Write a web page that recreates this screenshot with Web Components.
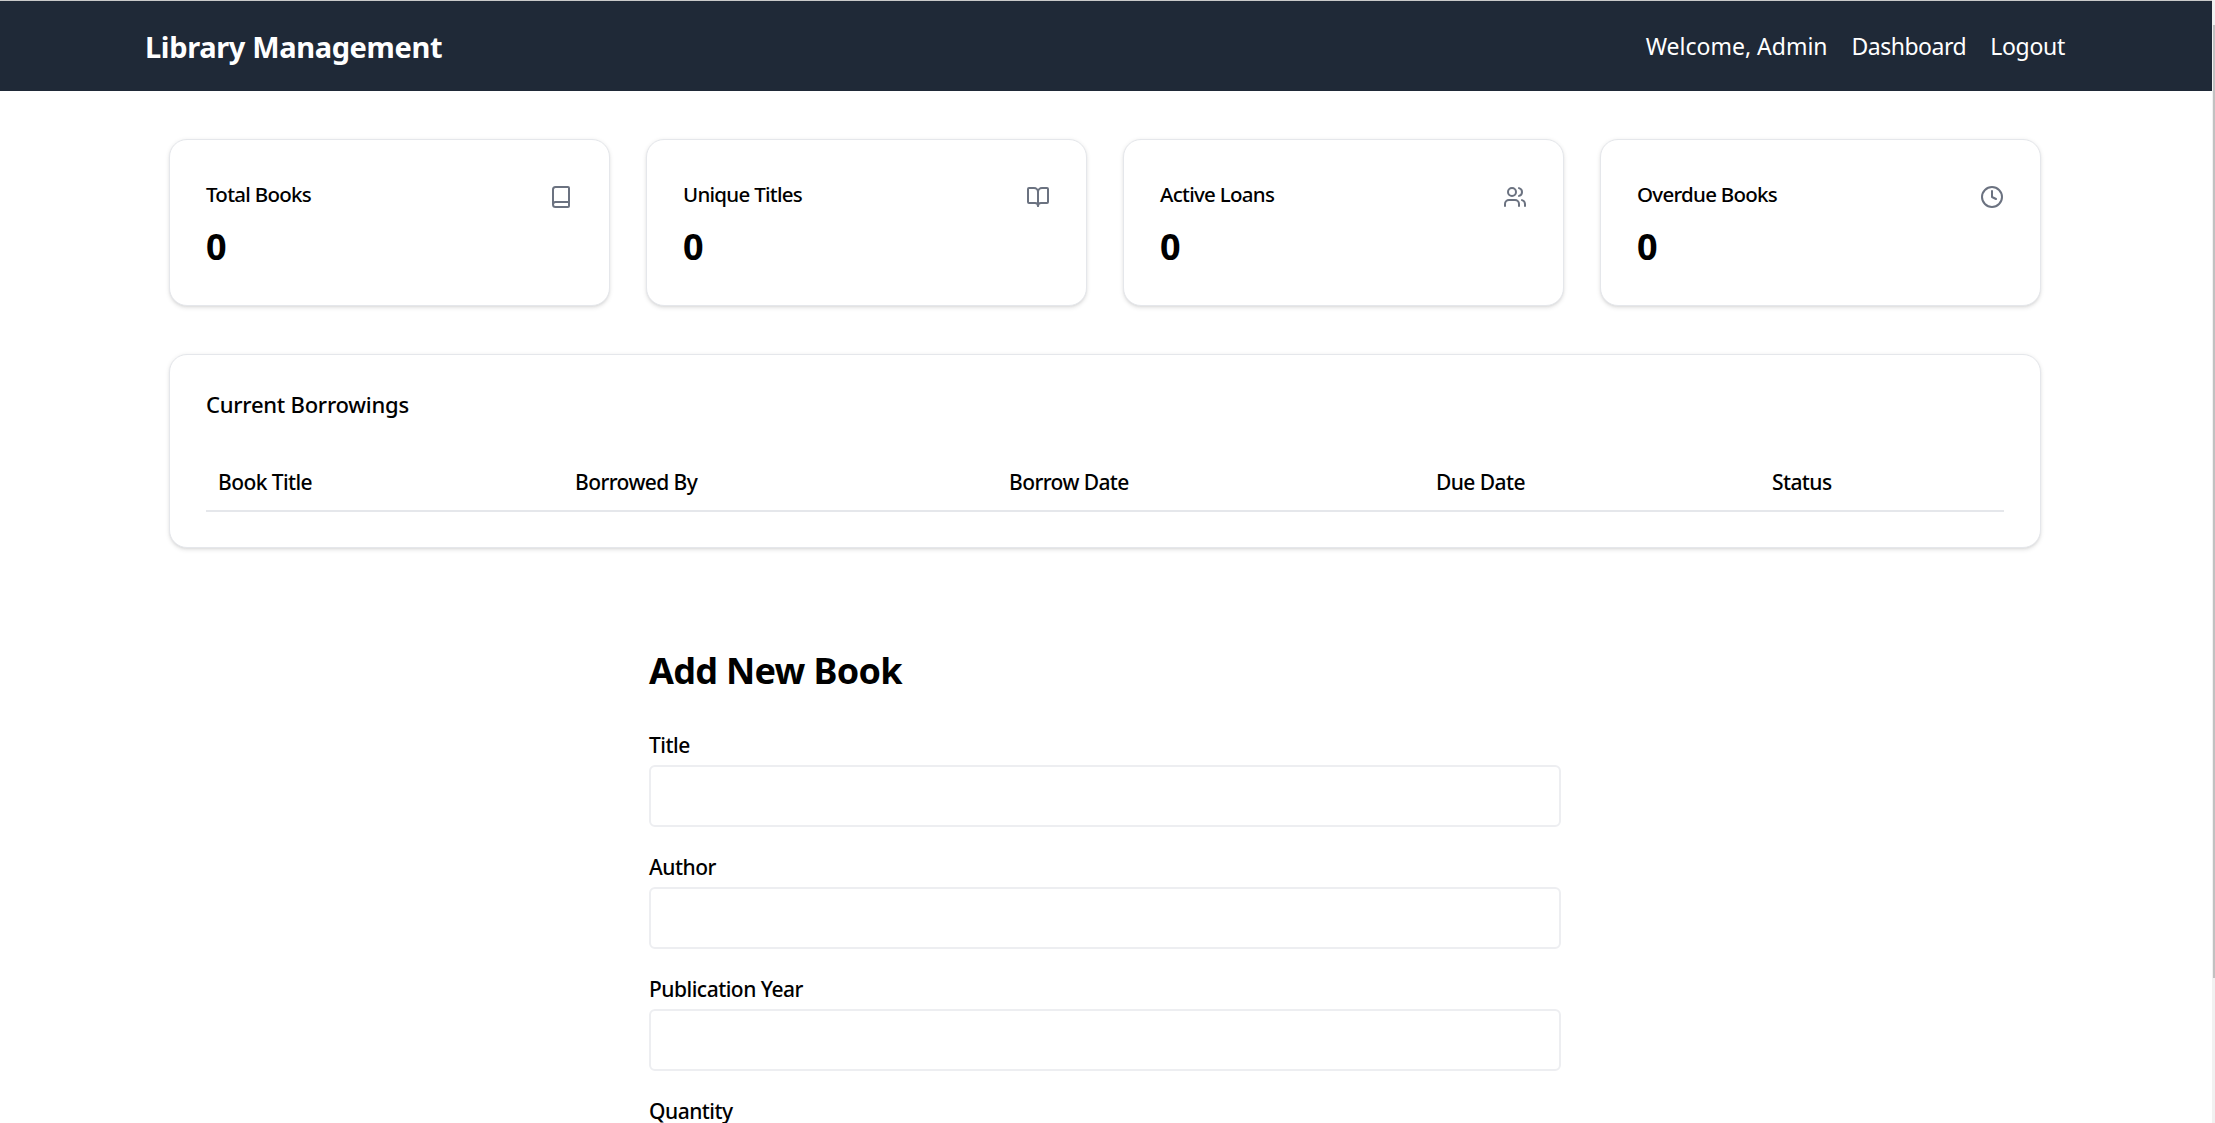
<!DOCTYPE html>
<html lang="en">
<head>
<meta charset="utf-8">
<title>Library Management</title>
<style>
  html, body { margin: 0; padding: 0; height: 100%; overflow: hidden; background: #fff; }
  body { font-family: "Noto Sans", "Open Sans", sans-serif; color: #000; }
</style>
</head>
<body>
<library-app></library-app>

<script>
const ICONS = {
  book: '<path d="M4 19.5v-15A2.5 2.5 0 0 1 6.5 2H19a1 1 0 0 1 1 1v18a1 1 0 0 1-1 1H6.5a1 1 0 0 1 0-5H20"/>',
  open: '<path d="M12 7v14"/><path d="M3 18a1 1 0 0 1-1-1V4a1 1 0 0 1 1-1h5a4 4 0 0 1 4 4 4 4 0 0 1 4-4h5a1 1 0 0 1 1 1v13a1 1 0 0 1-1 1h-6a3 3 0 0 0-3 3 3 3 0 0 0-3-3z"/>',
  users: '<path d="M16 21v-2a4 4 0 0 0-4-4H6a4 4 0 0 0-4 4v2"/><circle cx="9" cy="7" r="4"/><path d="M22 21v-2a4 4 0 0 0-3-3.87"/><path d="M16 3.13a4 4 0 0 1 0 7.75"/>',
  clock: '<circle cx="12" cy="12" r="10"/><polyline points="12 6 12 12 16 14"/>'
};

class LibIcon extends HTMLElement {
  constructor() {
    super();
    this.attachShadow({mode: 'open'});
  }
  connectedCallback() {
    this.shadowRoot.innerHTML = `
      <style>
        :host { display: block; width: 24px; height: 24px; color: #6b7280; }
        svg { display: block; }
      </style>
      <svg width="24" height="24" viewBox="0 0 24 24" fill="none" stroke="currentColor"
           stroke-width="2" stroke-linecap="round" stroke-linejoin="round">${ICONS[this.getAttribute('name')]}</svg>
    `;
  }
}

class LibNav extends HTMLElement {
  constructor() {
    super();
    this.attachShadow({mode: 'open'});
    this.shadowRoot.innerHTML = `
      <style>
        :host { display: block; background: #1f2937; color: #fff; border-top: 1px solid #c9c9c9; padding-right: 2px; }
        .inner { box-sizing: border-box; max-width: 1920px; height: 90px; margin: 0 auto;
                 display: flex; align-items: center; justify-content: space-between; }
        .brand { font-size: 29px; font-weight: 700; letter-spacing: -0.36px; }
        .links { display: flex; gap: 24px; font-size: 23px; }
        .dash { letter-spacing: -0.5px; }
        .out { letter-spacing: -0.28px; }
      </style>
      <div class="inner">
        <div class="brand">Library Management</div>
        <div class="links"><span>Welcome, Admin</span><span class="dash">Dashboard</span><span class="out">Logout</span></div>
      </div>
    `;
  }
}

class StatCard extends HTMLElement {
  constructor() {
    super();
    this.attachShadow({mode: 'open'});
    this.shadowRoot.innerHTML = `
      <style>
        :host { display: block; box-sizing: border-box; height: 167px; padding: 36px;
                background: #fff; border: 1px solid #e5e7eb; border-radius: 18px;
                box-shadow: 0 1.5px 4.5px rgba(0,0,0,.1), 0 1.5px 3px -1.5px rgba(0,0,0,.1); }
        .head { display: flex; justify-content: space-between; align-items: flex-start; height: 54px; }
        .label { font-size: 20.5px; font-weight: 500; line-height: 36px; letter-spacing: -0.72px; }
        ::slotted(lib-icon) { margin-top: 9px; }
        .value { font-size: 36px; font-weight: 700; line-height: 48px; margin-top: -7px; }
      </style>
      <div class="head"><div class="label"></div><slot></slot></div>
      <div class="value"></div>
    `;
  }
  connectedCallback() {
    this.shadowRoot.querySelector('.label').textContent = this.getAttribute('label');
    this.shadowRoot.querySelector('.value').textContent = this.getAttribute('value');
  }
}

class BorrowTable extends HTMLElement {
  constructor() {
    super();
    this.attachShadow({mode: 'open'});
    this.shadowRoot.innerHTML = `
      <style>
        :host { display: block; box-sizing: border-box; height: 194px; padding: 36px;
                background: #fff; border: 1px solid #e5e7eb; border-radius: 18px;
                box-shadow: 0 1.5px 4.5px rgba(0,0,0,.1), 0 1.5px 3px -1.5px rgba(0,0,0,.1); }
        h2 { margin: -5px 0 0; font-size: 22px; font-weight: 500; line-height: 36px; letter-spacing: -0.25px; }
        .row { display: grid; grid-template-columns: 357px 434px 427px 336px 1fr; box-sizing: border-box;
               margin-top: 29px; border-bottom: 2px solid #e5e7eb; height: 61px; padding-top: 3px; align-items: center; }
        .row span { padding-left: 12px; font-size: 21px; font-weight: 500; letter-spacing: -0.58px; }
      </style>
      <h2>Current Borrowings</h2>
      <div class="row">
        <span>Book Title</span><span>Borrowed By</span><span>Borrow Date</span><span>Due Date</span><span>Status</span>
      </div>
    `;
  }
}

class FormField extends HTMLElement {
  constructor() {
    super();
    this.attachShadow({mode: 'open'});
    this.shadowRoot.innerHTML = `
      <style>
        :host { display: block; margin-bottom: 24px; }
        label { display: block; font-size: 21px; font-weight: 500; line-height: 30px; padding-top: 1px; margin-bottom: 5px; letter-spacing: -0.5px; }
        input { display: block; box-sizing: border-box; width: 100%; height: 62px; padding: 0 18px;
                border: 2px solid #edeef1; border-radius: 6px; background: #fff; font: inherit; outline: none; }
      </style>
      <label for="f"></label>
      <input id="f" type="text">
    `;
  }
  connectedCallback() {
    this.shadowRoot.querySelector('label').textContent = this.getAttribute('label');
  }
}

class BookForm extends HTMLElement {
  constructor() {
    super();
    this.attachShadow({mode: 'open'});
    this.shadowRoot.innerHTML = `
      <style>
        :host { display: block; box-sizing: border-box; width: 1008px; margin: 51px auto 0; padding: 48px; }
        h1 { margin: 0 0 34px; font-size: 36px; font-weight: 700; line-height: 48px; letter-spacing: -0.7px; }
      </style>
      <h1>Add New Book</h1>
      <slot></slot>
    `;
  }
}

class ScrollStrip extends HTMLElement {
  constructor() {
    super();
    this.attachShadow({mode: 'open'});
    this.shadowRoot.innerHTML = `
      <style>
        :host { position: fixed; top: 0; right: 0; bottom: 0; width: 3px; background: #f1f1f1; }
        .thumb { position: absolute; top: 25px; left: 1px; right: 0; height: 953px; background: #c1c1c1; }
      </style>
      <div class="thumb"></div>
    `;
  }
}

class LibraryApp extends HTMLElement {
  constructor() {
    super();
    this.attachShadow({mode: 'open'});
    this.shadowRoot.innerHTML = `
      <style>
        :host { display: block; margin-right: 3px; }
        main { box-sizing: border-box; max-width: 1920px; margin: 0 auto; padding: 48px 25px 0 23px; }
        .stats { display: grid; grid-template-columns: repeat(4, 1fr); gap: 36px; margin-bottom: 48px; }
      </style>
      <lib-nav></lib-nav>
      <main>
        <div class="stats">
          <stat-card label="Total Books" value="0"><lib-icon name="book"></lib-icon></stat-card>
          <stat-card label="Unique Titles" value="0"><lib-icon name="open"></lib-icon></stat-card>
          <stat-card label="Active Loans" value="0"><lib-icon name="users"></lib-icon></stat-card>
          <stat-card label="Overdue Books" value="0"><lib-icon name="clock"></lib-icon></stat-card>
        </div>
        <borrow-table></borrow-table>
        <book-form>
          <form-field label="Title"></form-field>
          <form-field label="Author"></form-field>
          <form-field label="Publication Year"></form-field>
          <form-field label="Quantity"></form-field>
        </book-form>
      </main>
      <scroll-strip></scroll-strip>
    `;
  }
}

customElements.define('lib-icon', LibIcon);
customElements.define('lib-nav', LibNav);
customElements.define('stat-card', StatCard);
customElements.define('borrow-table', BorrowTable);
customElements.define('form-field', FormField);
customElements.define('book-form', BookForm);
customElements.define('scroll-strip', ScrollStrip);
customElements.define('library-app', LibraryApp);
</script>
</body>
</html>
